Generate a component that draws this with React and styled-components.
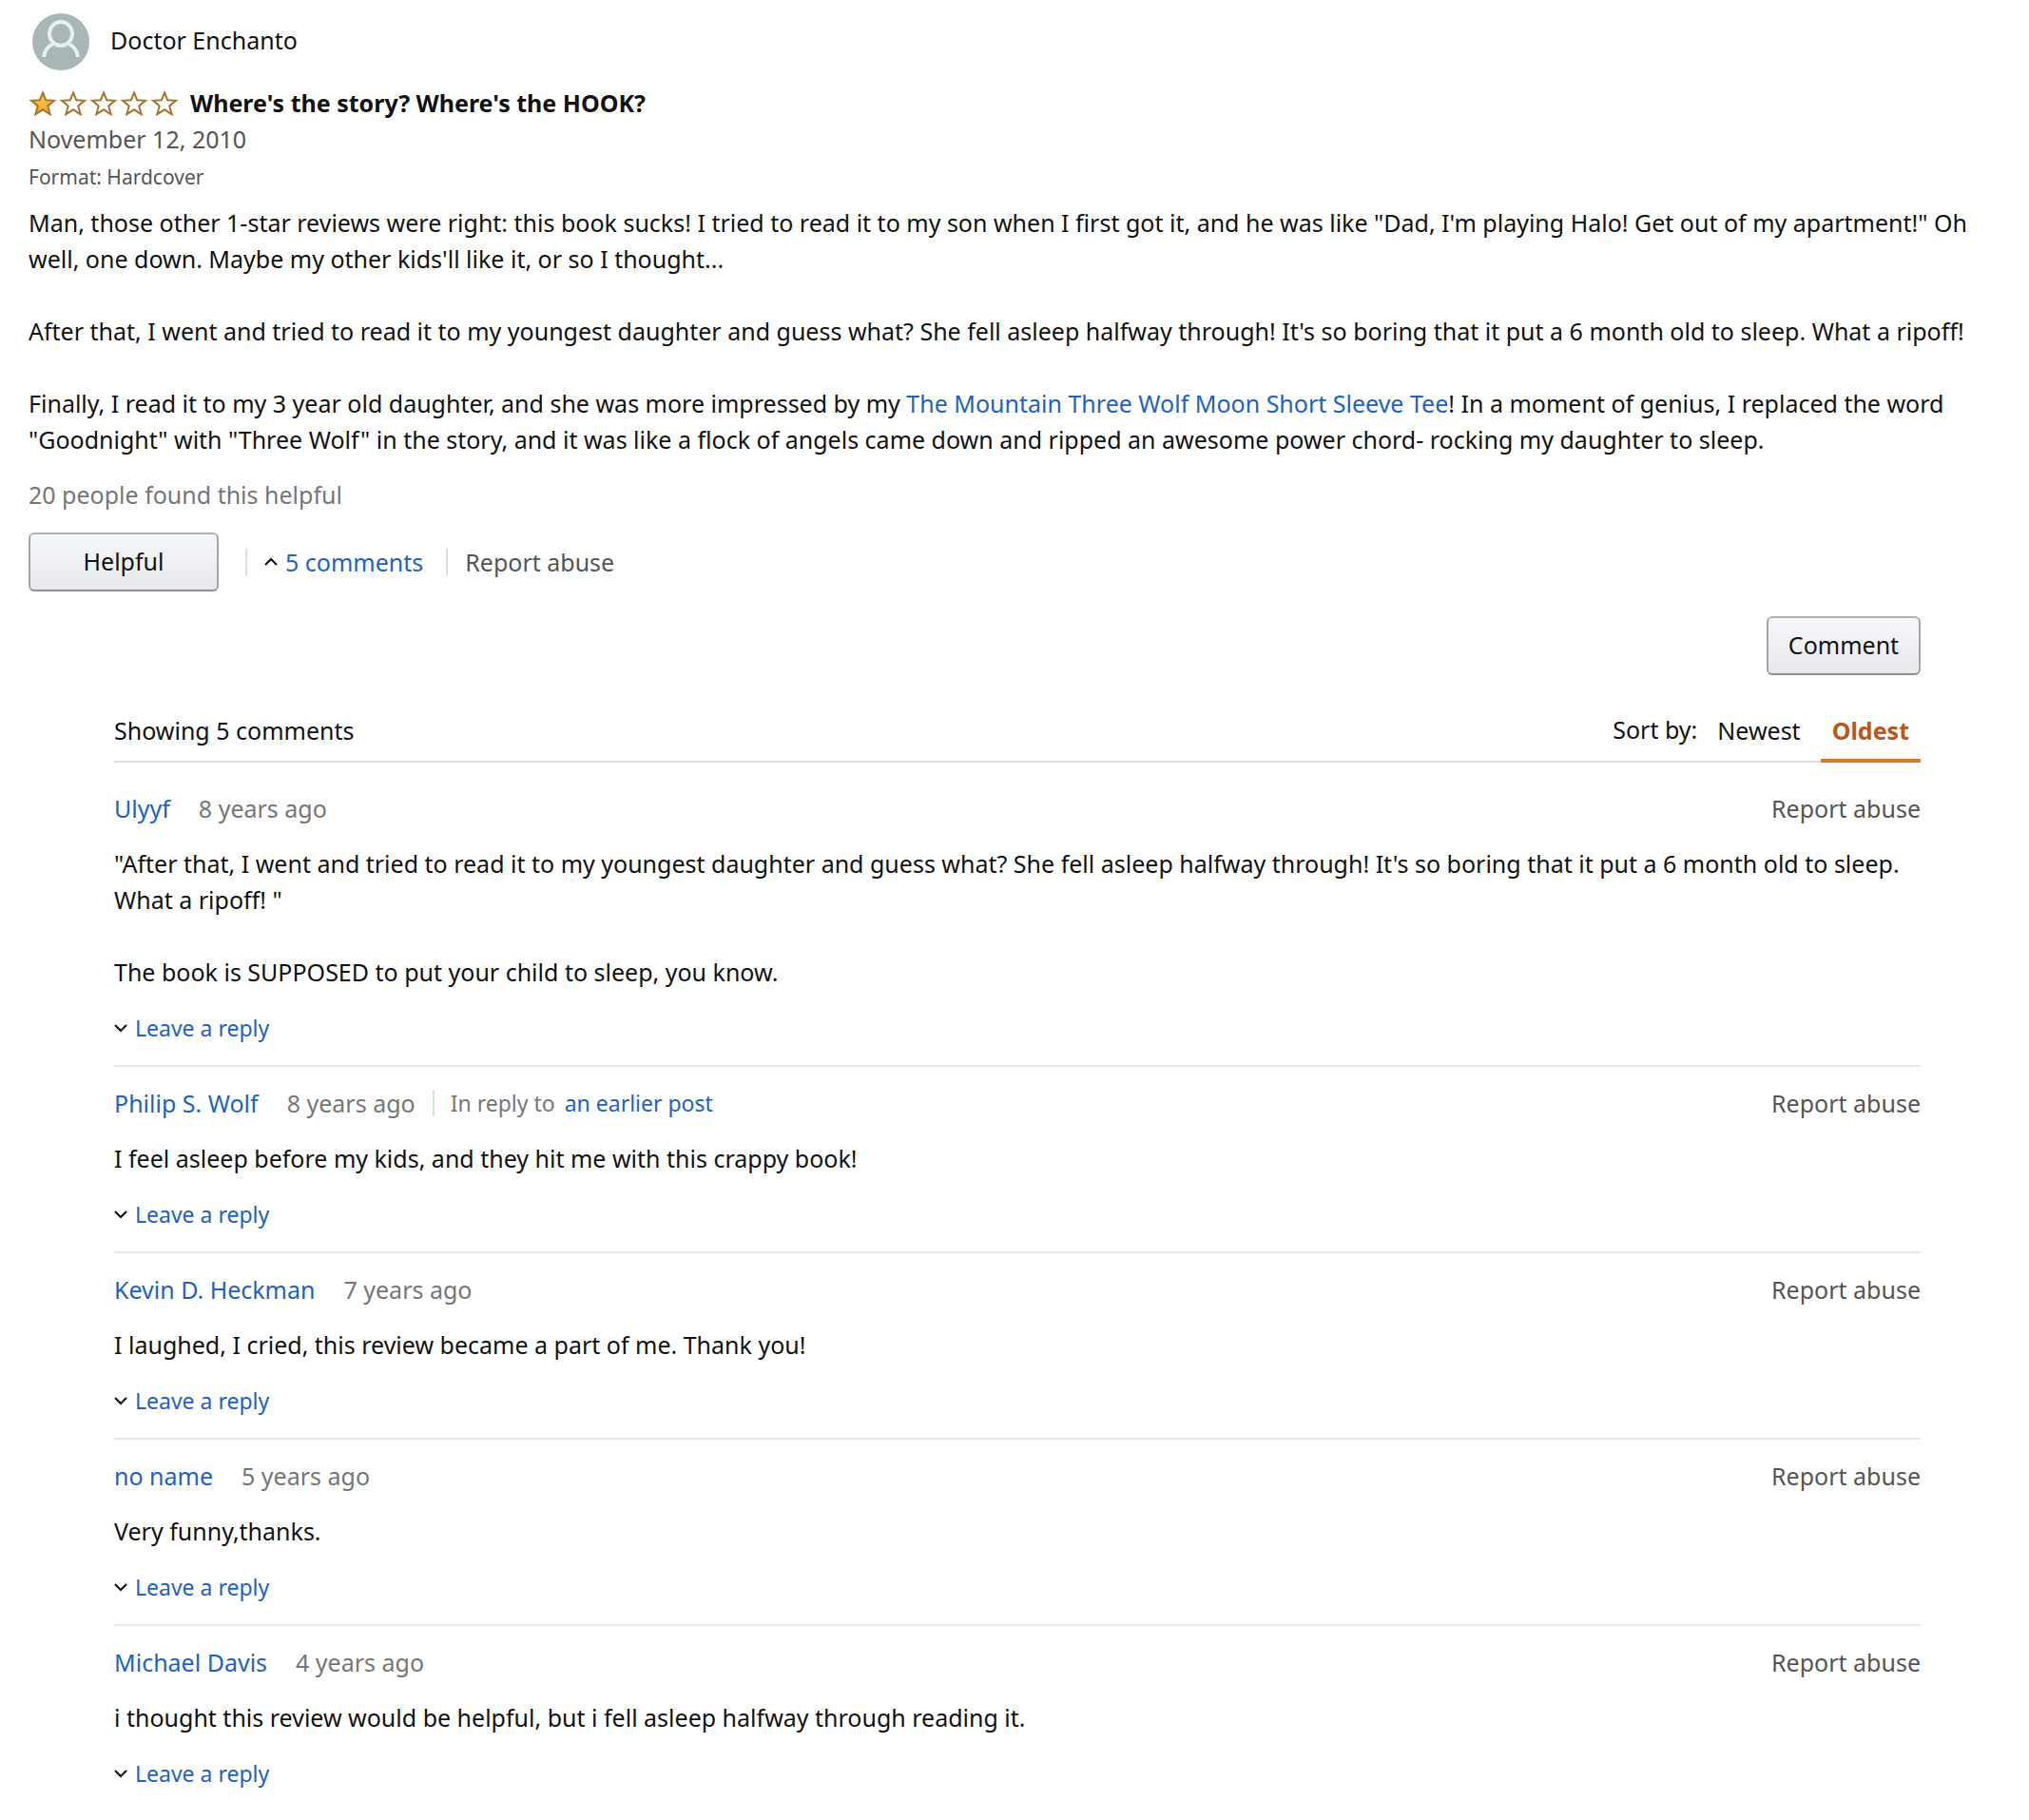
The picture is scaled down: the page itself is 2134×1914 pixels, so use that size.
import React, { useState } from 'react';
import styled, { createGlobalStyle } from 'styled-components';

const GlobalStyle = createGlobalStyle`
  * {
    box-sizing: border-box;
  }

  body {
    margin: 0;
    background: #fff;
    color: #111;
    font-family: 'Noto Sans', 'Open Sans', sans-serif;
    font-size: 25px;
    font-weight: 400;
    line-height: 38px;
  }

  h2, p, ul {
    margin: 0;
    padding: 0;
  }
`;

const Page = styled.main`
  padding: 14px 30px 20px;
`;

const Profile = styled.div`
  display: flex;
  align-items: center;
  gap: 22px;
  padding-left: 4px;
  margin-bottom: 15px;
`;

const Avatar = styled.svg`
  width: 60px;
  height: 60px;
`;

const ProfileName = styled.span`
  padding-bottom: 4px;
`;

const TitleRow = styled.div`
  display: flex;
  align-items: center;
  gap: 12px;
`;

const Stars = styled.div`
  display: flex;
  gap: 2px;
`;

const StarIcon = styled.svg`
  display: block;
  width: 30px;
  height: 30px;
`;

const Title = styled.h2`
  font-size: 25px;
  font-weight: 700;
  line-height: 38px;
`;

const Muted = styled.p`
  color: ${({ light }) => (light ? '#767676' : '#555')};
`;

const Format = styled.p`
  margin: 3px 0 11px;
  color: #555;
  font-size: 21px;
  line-height: 36px;
`;

const Paragraph = styled.p`
  & + & {
    margin-top: 38px;
  }
`;

const Link = styled.a`
  color: ${({ muted }) => (muted ? '#555' : '#2162bc')};
  font-size: ${({ small }) => (small ? '23px' : '25px')};
  text-decoration: none;

  &:hover {
    text-decoration: underline;
  }
`;

const Votes = styled.div`
  margin: 20px 0 21px;
`;

const Actions = styled.div`
  display: flex;
  align-items: center;
`;

const Button = styled.button`
  height: 62px;
  min-width: ${({ wide }) => (wide ? '200px' : '162px')};
  padding: 0 20px 2px;
  border: 2px solid;
  border-color: #adb1b8 #a2a6ac #8d9096;
  border-radius: 6px;
  background: linear-gradient(to bottom, #f7f8fa, #e7e9ec);
  color: #111;
  font: inherit;
  cursor: pointer;
`;

const Separator = styled.span`
  width: 2px;
  height: 28px;
  margin: 0 ${({ right }) => right}px 0 ${({ left }) => left}px;
  background: #ddd;
`;

const Toggle = styled.button`
  display: flex;
  align-items: center;
  gap: 8px;
  padding: 0;
  border: 0;
  background: none;
  color: #2162bc;
  font: inherit;
  font-size: ${({ small }) => (small ? '23px' : '25px')};
  line-height: ${({ small }) => (small ? '36px' : '38px')};
  cursor: pointer;
`;

const CaretIcon = styled.svg`
  width: 14px;
  height: 10px;
`;

const Comments = styled.section`
  padding: 26px 84px 0 90px;
`;

const CommentAction = styled.div`
  display: flex;
  justify-content: flex-end;
  margin-bottom: 36px;
`;

const SortBar = styled.div`
  display: flex;
  justify-content: space-between;
  height: 56px;
  margin-bottom: 29px;
  border-bottom: 2px solid #ddd;
`;

const SortLine = styled.div`
  padding-top: 3px;
`;

const SortOptions = styled.div`
  display: flex;
  gap: 9px;
`;

const SortLabel = styled.span`
  padding-top: 2px;
`;

const SortTab = styled.button`
  height: 56px;
  padding: 0 12px 8px;
  border: 0;
  border-bottom: 4px solid ${({ active }) => (active ? '#d9792b' : 'transparent')};
  background: none;
  color: ${({ active }) => (active ? '#b9571f' : '#111')};
  font: inherit;
  font-weight: ${({ active }) => (active ? 700 : 400)};
  cursor: pointer;
`;

const List = styled.ul`
  list-style: none;
`;

const Item = styled.li`
  padding-bottom: 21px;

  & + & {
    padding-top: 19px;
    border-top: 2px solid #e7e7e7;
  }
`;

const ItemHead = styled.div`
  display: flex;
  align-items: center;
  margin-bottom: 20px;
`;

const Age = styled.span`
  margin-left: 30px;
  color: #767676;
`;

const ReplyTo = styled.span`
  margin-right: 10px;
  color: #767676;
  font-size: 23px;
`;

const Report = styled.div`
  margin-left: auto;
`;

const ItemText = styled.div`
  margin-bottom: 22px;
`;

const comments = [
  {
    author: 'Ulyyf',
    age: '8 years ago',
    text: [
      '"After that, I went and tried to read it to my youngest daughter and guess what? She fell asleep halfway through! It\'s so boring that it put a 6 month old to sleep. What a ripoff! "',
      'The book is SUPPOSED to put your child to sleep, you know.',
    ],
  },
  {
    author: 'Philip S. Wolf',
    age: '8 years ago',
    inReply: true,
    text: ['I feel asleep before my kids, and they hit me with this crappy book!'],
  },
  {
    author: 'Kevin D. Heckman',
    age: '7 years ago',
    text: ['I laughed, I cried, this review became a part of me. Thank you!'],
  },
  {
    author: 'no name',
    age: '5 years ago',
    text: ['Very funny,thanks.'],
  },
  {
    author: 'Michael Davis',
    age: '4 years ago',
    text: ['i thought this review would be helpful, but i fell asleep halfway through reading it.'],
  },
];

function Star({ filled }) {
  return (
    <StarIcon viewBox="0 0 30 30" aria-hidden="true">
      <defs>
        <linearGradient id="gold" x1="0" y1="0" x2="0" y2="1">
          <stop offset="0" stopColor="#ffce5a" />
          <stop offset="1" stopColor="#f0a52a" />
        </linearGradient>
      </defs>
      <path
        d="M15 4.500 L18.200 12.200 L27 12.800 L20.300 18.400 L22.600 27 L15 22.300 L7.400 27 L9.700 18.400 L3 12.800 L11.800 12.200 Z"
        fill={ filled ? 'url(#gold)' : '#fff' }
        stroke="#a8742a"
        strokeWidth="2"
      />
    </StarIcon>
  );
}

function Caret({ up }) {
  return (
    <CaretIcon viewBox="0 0 14 10" aria-hidden="true">
      <path
        d={ up ? 'M1 8 L7 2 L13 8' : 'M1 2 L7 8 L13 2' }
        fill="none"
        stroke="#111"
        strokeWidth="2.2"
      />
    </CaretIcon>
  );
}

function Comment({ author, age, text, inReply }) {
  return (
    <Item>
      <ItemHead>
        <Link href="#author">{author}</Link>
        <Age>{age}</Age>
        {inReply && (
          <>
            <Separator left={ 18 } right={ 17 } />
            <ReplyTo>In reply to</ReplyTo>
            <Link small href="#earlier">an earlier post</Link>
          </>
        )}
        <Report><Link muted href="#report">Report abuse</Link></Report>
      </ItemHead>
      <ItemText>
        {text.map((line) => <Paragraph key={ line }>{line}</Paragraph>)}
      </ItemText>
      <Toggle small type="button">
        <Caret />
        Leave a reply
      </Toggle>
    </Item>
  );
}

export default function App() {
  const [sort, setSort] = useState('Oldest');

  return (
    <Page>
      <GlobalStyle />
      <Profile>
        <Avatar viewBox="0 0 60 60" aria-hidden="true">
          <circle cx="30" cy="30" r="30" fill="#a9b6b6" />
          <ellipse cx="30" cy="21.500" rx="12" ry="12.500" fill="none" stroke="#e9eff0" strokeWidth="4" />
          <path d="M12 46 C13 39 16.500 34.500 22 32 M48 46 C47 39 43.500 34.500 38 32" fill="none" stroke="#e9eff0" strokeWidth="4" />
        </Avatar>
        <ProfileName>Doctor Enchanto</ProfileName>
      </Profile>
      <TitleRow>
        <Stars role="img" aria-label="1 out of 5 stars">
          {[1, 2, 3, 4, 5].map((n) => <Star key={ n } filled={ n === 1 } />)}
        </Stars>
        <Title>Where&apos;s the story? Where&apos;s the HOOK?</Title>
      </TitleRow>
      <Muted>November 12, 2010</Muted>
      <Format>Format: Hardcover</Format>
      <Paragraph>
        Man, those other 1-star reviews were right: this book sucks! I tried to read it to my son
        when I first got it, and he was like &quot;Dad, I&apos;m playing Halo! Get out of my
        apartment!&quot; Oh well, one down. Maybe my other kids&apos;ll like it, or so I thought...
      </Paragraph>
      <Paragraph>
        After that, I went and tried to read it to my youngest daughter and guess what? She fell
        asleep halfway through! It&apos;s so boring that it put a 6 month old to sleep. What a
        ripoff!
      </Paragraph>
      <Paragraph>
        Finally, I read it to my 3 year old daughter, and she was more impressed by my
        {' '}
        <Link href="#tee">The Mountain Three Wolf Moon Short Sleeve Tee</Link>
        ! In a moment of genius, I replaced the word &quot;Goodnight&quot; with &quot;Three
        Wolf&quot; in the story, and it was like a flock of angels came down and ripped an awesome
        power chord- rocking my daughter to sleep.
      </Paragraph>
      <Votes>
        <Muted light>20 people found this helpful</Muted>
      </Votes>
      <Actions>
        <Button wide type="button">Helpful</Button>
        <Separator left={ 28 } right={ 18 } />
        <Toggle type="button">
          <Caret up />
          5 comments
        </Toggle>
        <Separator left={ 24 } right={ 18 } />
        <Link muted href="#report">Report abuse</Link>
      </Actions>
      <Comments>
        <CommentAction>
          <Button type="button">Comment</Button>
        </CommentAction>
        <SortBar>
          <SortLine>Showing 5 comments</SortLine>
          <SortOptions>
            <SortLabel>Sort by:</SortLabel>
            {['Newest', 'Oldest'].map((name) => (
              <SortTab
                key={ name }
                type="button"
                active={ sort === name ? 1 : 0 }
                onClick={ () => setSort(name) }
              >
                {name}
              </SortTab>
            ))}
          </SortOptions>
        </SortBar>
        <List>
          {comments.map((comment) => <Comment key={ comment.author } { ...comment } />)}
        </List>
      </Comments>
    </Page>
  );
}
